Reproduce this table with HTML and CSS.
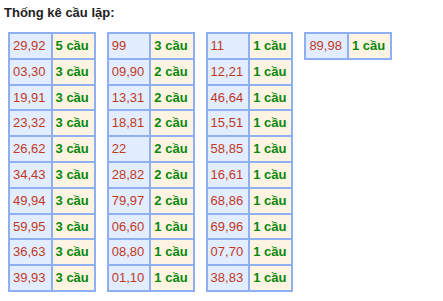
FILE: index.html
```html
<!DOCTYPE html>
<html>
<head>
<meta charset="utf-8">
<link rel="stylesheet" href="styles.css">
</head>
<body>
<div class="title">Thống kê cầu lặp:</div>
<div class="tables">
  <table class="cau">
    <tr><td class="num">29,92</td><td class="cnt">5 cầu</td></tr>
    <tr><td class="num">03,30</td><td class="cnt">3 cầu</td></tr>
    <tr><td class="num">19,91</td><td class="cnt">3 cầu</td></tr>
    <tr><td class="num">23,32</td><td class="cnt">3 cầu</td></tr>
    <tr><td class="num">26,62</td><td class="cnt">3 cầu</td></tr>
    <tr><td class="num">34,43</td><td class="cnt">3 cầu</td></tr>
    <tr><td class="num">49,94</td><td class="cnt">3 cầu</td></tr>
    <tr><td class="num">59,95</td><td class="cnt">3 cầu</td></tr>
    <tr><td class="num">36,63</td><td class="cnt">3 cầu</td></tr>
    <tr><td class="num">39,93</td><td class="cnt">3 cầu</td></tr>
  </table>
  <table class="cau">
    <tr><td class="num">99</td><td class="cnt">3 cầu</td></tr>
    <tr><td class="num">09,90</td><td class="cnt">2 cầu</td></tr>
    <tr><td class="num">13,31</td><td class="cnt">2 cầu</td></tr>
    <tr><td class="num">18,81</td><td class="cnt">2 cầu</td></tr>
    <tr><td class="num">22</td><td class="cnt">2 cầu</td></tr>
    <tr><td class="num">28,82</td><td class="cnt">2 cầu</td></tr>
    <tr><td class="num">79,97</td><td class="cnt">2 cầu</td></tr>
    <tr><td class="num">06,60</td><td class="cnt">1 cầu</td></tr>
    <tr><td class="num">08,80</td><td class="cnt">1 cầu</td></tr>
    <tr><td class="num">01,10</td><td class="cnt">1 cầu</td></tr>
  </table>
  <table class="cau">
    <tr><td class="num">11</td><td class="cnt">1 cầu</td></tr>
    <tr><td class="num">12,21</td><td class="cnt">1 cầu</td></tr>
    <tr><td class="num">46,64</td><td class="cnt">1 cầu</td></tr>
    <tr><td class="num">15,51</td><td class="cnt">1 cầu</td></tr>
    <tr><td class="num">58,85</td><td class="cnt">1 cầu</td></tr>
    <tr><td class="num">16,61</td><td class="cnt">1 cầu</td></tr>
    <tr><td class="num">68,86</td><td class="cnt">1 cầu</td></tr>
    <tr><td class="num">69,96</td><td class="cnt">1 cầu</td></tr>
    <tr><td class="num">07,70</td><td class="cnt">1 cầu</td></tr>
    <tr><td class="num">38,83</td><td class="cnt">1 cầu</td></tr>
  </table>
  <table class="cau">
    <tr><td class="num">89,98</td><td class="cnt">1 cầu</td></tr>
  </table>
</div>
</body>
</html>
```

FILE: styles.css
```css
body {
  margin: 0;
  background: #ffffff;
  font-family: Arial, "Liberation Sans", sans-serif;
}

.title {
  font-size: 13px;
  font-weight: bold;
  color: #222222;
  line-height: 15px;
  padding: 5px 0 0 4px;
}

.tables {
  display: flex;
  align-items: flex-start;
  gap: 11px;
  padding: 12px 0 0 8px;
}

.cau {
  border-collapse: separate;
  border-spacing: 0;
  border: 1px solid #8eb0f2;
}

.cau td {
  border: 1px solid #8eb0f2;
  font-size: 13px;
  line-height: 23.8px;
  height: 23.8px;
  padding: 0 5px 0 3px;
  white-space: nowrap;
}

.cau .num {
  background: #e2edff;
  color: #c0391f;
}

.cau .cnt {
  background: #fff4e2;
  color: #07870c;
  font-weight: bold;
}
```
